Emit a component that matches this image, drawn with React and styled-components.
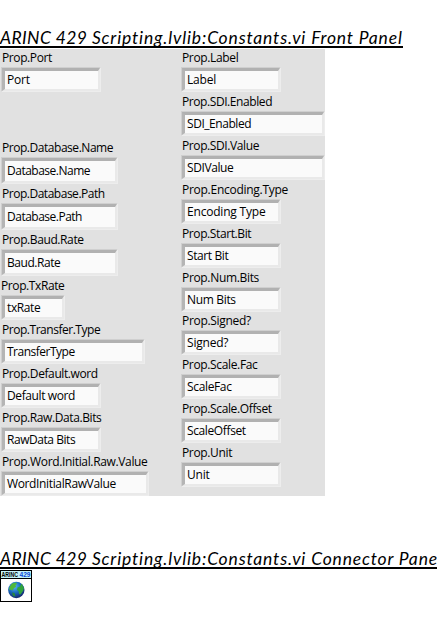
import React from "react";
import styled, { createGlobalStyle } from "styled-components";

const GlobalStyle = createGlobalStyle`
  body { margin: 0; background: #fff; color: #000; overflow: hidden; }
`;

const Page = styled.main`
  width: 437px;
  height: 627px;
  padding-top: 26px;
  box-sizing: border-box;
  overflow: hidden;
`;

const Title = styled.h2`
  box-sizing: border-box;
  width: ${(p) => p.$width}px;
  height: 22px;
  margin: 0;
  overflow: hidden;
  border-bottom: 2px solid #000;
  font: italic 400 17.5px/24px Lato, "Open Sans", sans-serif;
  letter-spacing: 0.83px;
  white-space: nowrap;
`;

const Protocol = styled.span`
  letter-spacing: 0.4px;
`;

const Panel = styled.section`
  display: grid;
  grid-template-columns: 180px 145px;
  width: 325px;
  height: 447px;
  margin: 1px 0 51px;
  background: #e1e1e1;
  font: 12px/18px "Open Sans", "Noto Sans", sans-serif;
`;

const Column = styled.div`
  display: flex;
  flex-direction: column;
  padding-left: 1px;
`;

const Field = styled.div`
  margin-bottom: ${(p) => p.$gap}px;
`;

const Label = styled.label`
  display: block;
  height: 18px;
  padding-left: ${(p) => p.$inset}px;
  letter-spacing: ${(p) => p.$spacing}px;
  white-space: nowrap;
`;

const Box = styled.div`
  box-sizing: border-box;
  width: ${(p) => p.$width}px;
  height: ${(p) => p.$height}px;
  border: 1px solid;
  border-color: #cfcfcf #ededed #ededed #cfcfcf;
`;

const Value = styled.div`
  box-sizing: border-box;
  height: 100%;
  padding-left: 2px;
  border: 3px solid;
  border-color: #b1b1b1 #e9e9e9 #e9e9e9 #b5b5b5;
  border-right-width: 2px;
  border-bottom-width: 2px;
  background: #fafafa;
  line-height: ${(p) => p.$line}px;
  letter-spacing: ${(p) => p.$spacing}px;
  white-space: nowrap;
`;

const Badge = styled.svg`
  display: block;
  margin-top: 1px;
`;

const left = [
  { label: "Prop.Port", value: "Port", width: 100, gap: 47, ls: -0.4 },
  { label: "Prop.Database.Name", value: "Database.Name", width: 117, height: 27, ls: -0.46, vs: -0.5 },
  { label: "Prop.Database.Path", value: "Database.Path", width: 117, height: 27, ls: -0.48, vs: -0.5 },
  { label: "Prop.Baud.Rate", value: "Baud.Rate", width: 117, height: 27, ls: -0.4, vs: -0.45 },
  { label: "Prop.TxRate", value: "txRate", width: 64, inset: 0, ls: -0.4, vs: -0.4 },
  { label: "Prop.Transfer.Type", value: "TransferType", width: 144, ls: -0.47, vs: -0.5 },
  { label: "Prop.Default.word", value: "Default word", width: 100, ls: -0.4, vs: -0.4 },
  { label: "Prop.Raw.Data.Bits", value: "RawData Bits", width: 100, ls: -0.4, vs: -0.45 },
  { label: "Prop.Word.Initial.Raw.Value", value: "WordInitialRawValue", width: 148, ls: -0.35, vs: -0.36 },
];

const right = [
  { label: "Prop.Label", value: "Label", width: 100, ls: -0.35 },
  { label: "Prop.SDI.Enabled", value: "SDI_Enabled", width: 144, ls: -0.42, vs: -0.45 },
  { label: "Prop.SDI.Value", value: "SDIValue", width: 144, ls: -0.4, vs: -0.4 },
  { label: "Prop.Encoding.Type", value: "Encoding Type", width: 100, ls: -0.27, vs: -0.2 },
  { label: "Prop.Start.Bit", value: "Start Bit", width: 100, ls: -0.4, vs: -0.4 },
  { label: "Prop.Num.Bits", value: "Num Bits", width: 100, gap: 0, ls: -0.33, vs: -0.33 },
  { label: "Prop.Signed?", value: "Signed?", width: 100, ls: -0.3 },
  { label: "Prop.Scale.Fac", value: "ScaleFac", width: 100, ls: -0.35, vs: -0.35 },
  { label: "Prop.Scale.Offset", value: "ScaleOffset", width: 100, ls: -0.36, vs: -0.38 },
  { label: "Prop.Unit", value: "Unit", width: 100, ls: -0.35 },
];

function Fields({ items }) {
  return (
    <Column>
      {items.map(({ label, value, width, height = 25, gap = 1, inset = 1, ls = -0.2, vs = -0.2 }) => (
        <Field key={label} $gap={gap}>
          <Label $inset={inset} $spacing={ls}>{label}</Label>
          <Box $width={width} $height={height}>
            <Value $line={height - 7} $spacing={vs}>{value}</Value>
          </Box>
        </Field>
      ))}
    </Column>
  );
}

function ConnectorIcon() {
  return (
    <Badge width="32" height="32" viewBox="0 0 32 32">
      <defs>
        <radialGradient id="sea" cx="40%" cy="30%" r="70%">
          <stop offset="0" stopColor="#55b9ef" />
          <stop offset="0.55" stopColor="#1766bd" />
          <stop offset="1" stopColor="#14286d" />
        </radialGradient>
      </defs>
      <rect x="0.5" y="0.5" width="31" height="31" fill="#fff" stroke="#000" />
      <rect x="1" y="1" width="30" height="7" fill="#c3f2f8" />
      <path d="M0 8.5H32" stroke="#000" />
      <g fontFamily="Liberation Sans, sans-serif" fontWeight="700" fontSize="6.5">
        <text x="1.5" y="7" textLength="16.5" lengthAdjust="spacingAndGlyphs">ARINC</text>
        <text x="19.5" y="7" fill="#0b48d8" textLength="11" lengthAdjust="spacingAndGlyphs">429</text>
      </g>
      <circle cx="16.3" cy="20" r="8.2" fill="url(#sea)" />
      <path d="M9.5 17L12 13.5L16 12.5L17 14L15.5 15L16 17L14 18L12.5 20.5L10 19.5L9 20.5Z" fill="#4fb83a" />
      <path d="M17.5 17.5L20 16.5L21.5 13.5L24 18L23 21L20.5 24.5L19 24L18.5 21L17 20Z" fill="#31a43b" />
      <path d="M12 22.5L14.5 23L15.5 26.5L13 26Z" fill="#26863d" />
    </Badge>
  );
}

export default function App() {
  return (
    <Page>
      <GlobalStyle />
      <Title $width={403}><Protocol>ARINC 429 </Protocol>Scripting.lvlib:Constants.vi Front Panel</Title>
      <Panel>
        <Fields items={left} />
        <Fields items={right} />
      </Panel>
      <Title $width={437}><Protocol>ARINC 429 </Protocol>Scripting.lvlib:Constants.vi Connector Pane</Title>
      <ConnectorIcon />
    </Page>
  );
}
